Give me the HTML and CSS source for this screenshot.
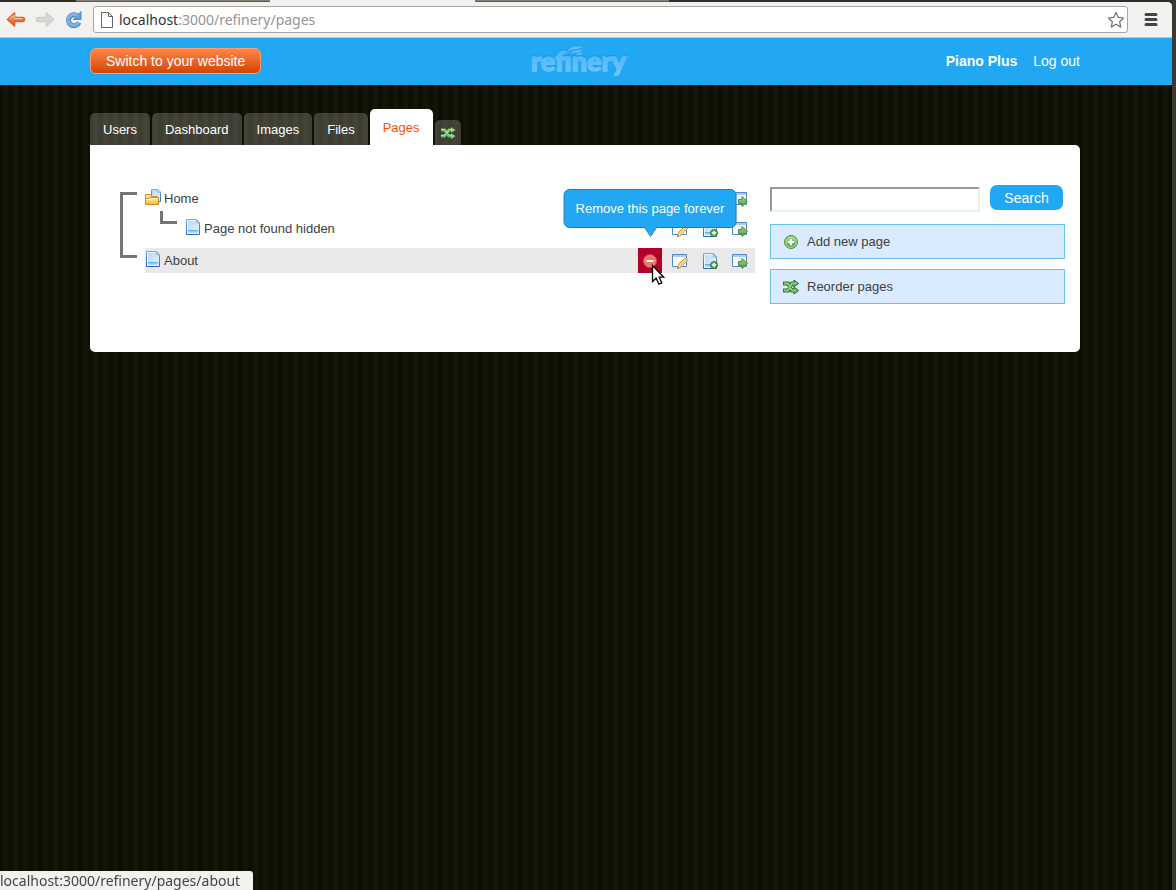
FILE: index.html
```html
<!DOCTYPE html>
<html lang="en">
<head>
<meta charset="utf-8">
<title>Refinery - Pages</title>
<link rel="stylesheet" href="styles.css">
</head>
<body>
<svg class="sprites" aria-hidden="true">
  <defs>
    <linearGradient id="paper" x1="0" y1="0" x2="1" y2="1"><stop offset="0" stop-color="#b5d6f8"/><stop offset="1" stop-color="#eaf5ff"/></linearGradient>
    <linearGradient id="gold" x1="0" y1="0" x2="0" y2="1"><stop offset="0" stop-color="#fff1a0"/><stop offset="1" stop-color="#eebc3c"/></linearGradient>
    <linearGradient id="blueline" x1="0" y1="0" x2="0" y2="1"><stop offset="0" stop-color="#78abe4"/><stop offset="1" stop-color="#2d67b2"/></linearGradient>
    <linearGradient id="leaf" x1="0" y1="0" x2="0" y2="1"><stop offset="0" stop-color="#a5dc88"/><stop offset="1" stop-color="#519941"/></linearGradient>
    <linearGradient id="orange" x1="0" y1="0" x2="0" y2="1"><stop offset="0" stop-color="#f9a66c"/><stop offset="1" stop-color="#d9571a"/></linearGradient>
  </defs>
  <symbol id="page" viewBox="0 0 16 16">
    <path d="M1.500.5h10l3 3v12h-13z" fill="url(#paper)" stroke="url(#blueline)"/>
    <path d="M2.500 14.500v-13H11" fill="none" stroke="#fff" opacity=".7"/>
    <path d="M11.300 1v2.800H14z" fill="#f4faff" stroke="#5b93d4" stroke-width=".6"/>
    <path d="M3 11h10v2.500H3z" fill="#8fd0ff"/><path d="M3 11.500h10" stroke="#57b5ff"/><path d="M2 14.500h12" stroke="#eef8ff"/>
  </symbol>
  <symbol id="folder" viewBox="0 0 16 16">
    <path d="M6.500.5h6.500l2.500 2.500v9.500h-9z" fill="url(#paper)" stroke="url(#blueline)"/>
    <path d="M12.800 1v2.200h2.200" fill="#fff" stroke="#5b93d4" stroke-width=".6"/>
    <path d="M.5 15V5.500h5l1 2h6V15" fill="#ffe68b" stroke="#d59a2e"/>
    <path d="M.5 15.500V9.500H4l1-1h8.500v7z" fill="url(#gold)" stroke="#d58b28"/>
    <path d="M1.500 10.500h3l1-1h7" fill="none" stroke="#fff8cf"/>
  </symbol>
  <symbol id="window" viewBox="0 0 16 16">
    <path d="M.5 1.500h14v12H.5z" fill="#fff" stroke="#5287c8"/>
    <path d="M1 3h13" stroke="#a9cdf5" stroke-width="2"/>
    <path d="M2 5h11v7H2z" fill="#f6faff"/>
  </symbol>
  <symbol id="edit" viewBox="0 0 16 16">
    <use href="#window"/>
    <path d="M5.500 15.500l1-4 6-6q2.500-.5 3 2l-6.500 6.700z" fill="#f5b83e" stroke="#bd7d20"/>
    <path d="M7.500 12l5.500-5.500M9 13.200l5.500-5.500" stroke="#ffe391" stroke-width="1.200"/>
    <path d="M5.800 15.300l.9-3.200 2.100 2z" fill="#fff0d0"/><path d="M5.500 15.500l.5-1.500 1 1z" fill="#544e46"/>
    <path d="M12 6l1-1q2.200.2 2.300 2.200l-1 1z" fill="#f0c49b"/>
  </symbol>
  <symbol id="add" viewBox="0 0 16 16">
    <use href="#page"/>
    <circle cx="12" cy="12" r="3.500" fill="#5aa448" stroke="#347b34"/>
    <path d="M12 9.800v4.400M9.800 12h4.400" stroke="#fff" stroke-width="1.400"/>
  </symbol>
  <symbol id="go" viewBox="0 0 16 16">
    <use href="#window"/>
    <path d="M6.500 8.500h3.500V5.500l5.500 5-5.500 5v-3H6.500z" fill="url(#leaf)" stroke="#468b3b"/>
  </symbol>
  <symbol id="remove" viewBox="0 0 16 16">
    <circle cx="8" cy="8" r="6.500" fill="#e85b50" stroke="#d84c46"/>
    <circle cx="8" cy="8" r="5.300" fill="#ea7065" stroke="#f1a59c" stroke-width=".8"/>
    <path d="M4.500 8h7" stroke="#fff" stroke-width="2"/>
  </symbol>
  <symbol id="plus" viewBox="0 0 16 16">
    <circle cx="8" cy="8" r="6.500" fill="#75b965" stroke="#4c9143"/>
    <circle cx="8" cy="8" r="5.200" fill="url(#leaf)" stroke="#b5dfaa"/>
    <path d="M8 4.800v6.400M4.800 8h6.400" stroke="#fff" stroke-width="2.200"/>
  </symbol>
  <symbol id="shuffle" viewBox="0 0 16 16">
    <path d="M0 4.500h5l4 7h2M0 11.500h5l4-7h2" fill="none" stroke="#35773a" stroke-width="4"/>
    <path d="M11 1l4.500 3.500L11 7.700zM11 8l4.500 3.500L11 15z" fill="#73b765" stroke="#286830"/>
    <path d="M1 4.500h4l4 7h4M1 11.500h4l4-7h4" fill="none" stroke="#8fcc80" stroke-width="2"/>
  </symbol>
  <symbol id="shuffle-tab" viewBox="0 0 16 16">
    <path d="M1 5h3.500l4.500 6h3M1 11h3.500L9 5h3" fill="none" stroke="#6fb766" stroke-width="3"/>
    <path d="M11 2l4.500 3L11 7.700zM11 8.300l4.500 2.700L11 14z" fill="#8fd184"/>
    <path d="M1 4.500h3.500l5 6H12M1 10.500h3.500l5-6H12" fill="none" stroke="#b7eaa6"/>
  </symbol>
</svg>

<div class="frame">
  <div class="tabstrip"><span class="strip-dark"></span><span class="strip-tab"></span><span class="strip-active"></span><span class="strip-tab"></span></div>
  <div class="toolbar">
    <button class="nav back" aria-label="Back"><svg viewBox="0 0 20 20"><path d="M1.500 9.500L8.500 3v4.500H16q2.500 0 2.500 2t-2.500 2H8.500V16z" fill="url(#orange)" stroke="#d9622a" stroke-width="1.600" stroke-linejoin="round"/><path d="M3.500 9L8 5v3.500h8.500" fill="none" stroke="#ffc89e"/></svg></button>
    <button class="nav forward" aria-label="Forward"><svg viewBox="0 0 20 20"><path d="M18.500 9.500L11.500 3v4.500H4q-2.500 0-2.500 2t2.500 2h7.500V16z" fill="#d9d8d6" stroke="#cfcecc" stroke-width="1.600" stroke-linejoin="round"/></svg></button>
    <button class="nav reload" aria-label="Reload"><svg viewBox="0 0 20 20"><path d="M13.500 6A5.500 5.500 0 1 0 15 12.500" fill="none" stroke="#4c86c3" stroke-width="5"/><path d="M17 1.500v8H9.500z" fill="#6aa0d8" stroke="#4c86c3"/><path d="M13.500 6A5.500 5.500 0 1 0 14.500 12.500" fill="none" stroke="#80b1e2" stroke-width="3.200"/></svg></button>
    <div class="address">
      <svg class="doc" viewBox="0 0 12 16"><path d="M.5.500h7l4 4v11H.5z" fill="#fff" stroke="#666"/><path d="M7.500.5v4h4" fill="none" stroke="#666"/></svg>
      <span class="url"><b>localhost</b>:3000/refinery/pages</span>
      <button class="star" aria-label="Bookmark"><svg viewBox="0 0 20 20"><path d="M10 1.500l2.500 5.700 6 .6-4.500 4.100 1.300 6L10 14.800l-5.300 3.100 1.300-6L1.500 7.800l6-.6z" fill="#fff" stroke="#777" stroke-width="1.400" stroke-linejoin="round"/></svg></button>
    </div>
    <button class="menu" aria-label="Menu"><svg viewBox="0 0 14 13"><path d="M2 1.500h10M2 6.500h10M2 11.500h10" stroke="#444" stroke-width="3" stroke-linecap="round"/></svg></button>
  </div>

  <header class="site-bar">
    <div class="bar-inner">
      <div class="bar-left"><a class="switch" href="#">Switch to your website</a></div>
      <a class="logo" href="#" aria-label="refinery">
        <svg viewBox="0 0 110 34"><defs><linearGradient id="logofill" x1="0" y1="0" x2="0" y2="1"><stop offset="0" stop-color="#42b1f7"/><stop offset="1" stop-color="#70c7ff"/></linearGradient></defs>
          <text class="logo-shadow" x="1" y="26">refinery</text><text class="logo-text" x="1" y="27">refinery</text>
          <path d="M36 10q3-8 10-8 5 1 8-1-3 5-8 4.500-6-.5-10 4.500zM39 11q4-6 9-5 4 0 6-2-3 6-8 5-4 0-7 2zM44 11q4-3 7-2.500 2 0 3-1.500-1 5-6 4z" fill="#5dbdfb" stroke="#1b96e3" stroke-width=".5"/>
        </svg>
      </a>
      <nav class="account"><a class="site-name" href="#">Piano Plus</a><a href="#">Log out</a></nav>
    </div>
  </header>

  <main class="wrap">
    <nav class="tabs">
      <a href="#">Users</a><a href="#">Dashboard</a><a href="#">Images</a><a href="#">Files</a><a class="current" href="#">Pages</a>
      <a class="reorder" href="#" aria-label="Reorder tabs"><svg><use href="#shuffle-tab"/></svg></a>
    </nav>
    <div class="panel">
      <section class="tree">
        <span class="bracket"></span>
        <ul>
          <li>
            <div class="row"><svg class="kind"><use href="#folder"/></svg><span class="title">Home</span>
              <span class="actions"><a href="#" aria-label="Edit"><svg><use href="#edit"/></svg></a><a href="#" aria-label="Add child"><svg><use href="#add"/></svg></a><a href="#" aria-label="View"><svg><use href="#go"/></svg></a></span></div>
            <div class="child"><span class="elbow"></span>
              <div class="row"><svg class="kind"><use href="#page"/></svg><span class="title">Page not found hidden</span>
                <span class="actions"><a href="#" aria-label="Edit"><svg><use href="#edit"/></svg></a><a href="#" aria-label="Add child"><svg><use href="#add"/></svg></a><a href="#" aria-label="View"><svg><use href="#go"/></svg></a></span></div>
            </div>
          </li>
          <li>
            <div class="row hovered"><svg class="kind"><use href="#page"/></svg><span class="title">About</span>
              <span class="actions">
                <a class="delete" href="#" aria-label="Remove this page forever"><svg><use href="#remove"/></svg>
                  <span class="tooltip">Remove this page forever<svg class="nib" viewBox="0 0 14 11"><path d="M1 0l6 9 6-9z" fill="#22a7f2"/><path d="M1 .5l6 9 6-9" fill="none" stroke="#1780bd"/></svg></span>
                  <svg class="cursor" viewBox="0 0 14 22"><path d="M1.500 1.500v16l3.700-3.300 2.700 6 2.900-1.300-2.600-5.700h4.500z" fill="#fff" stroke="#000" stroke-width="1.300"/></svg>
                </a><a href="#" aria-label="Edit"><svg><use href="#edit"/></svg></a><a href="#" aria-label="Add child"><svg><use href="#add"/></svg></a><a href="#" aria-label="View"><svg><use href="#go"/></svg></a></span></div>
          </li>
        </ul>
      </section>
      <aside class="side">
        <form class="search"><input type="search" aria-label="Search pages"><button type="button">Search</button></form>
        <a class="action" href="#"><svg><use href="#plus"/></svg>Add new page</a>
        <a class="action" href="#"><svg><use href="#shuffle"/></svg>Reorder pages</a>
      </aside>
    </div>
  </main>
</div>
<div class="status">localhost:3000/refinery/pages/about</div>
</body>
</html>
```

FILE: styles.css
```css
* { box-sizing: border-box; }
body { margin: 0; background: #3b3936; color: #404040; font: 13px/18px "Liberation Sans", Arial, sans-serif; }
a { color: inherit; text-decoration: none; }
svg { display: block; width: 16px; height: 16px; flex: none; }
button { padding: 0; border: 0; background: none; font: inherit; }
.sprites { position: absolute; width: 0; height: 0; }

.frame {
  min-height: 100vh;
  border-right: 4px solid #3b3936;
  background: repeating-linear-gradient(90deg, #0e0e01 0 3px, #141408 3px 8px, #0e0e01 8px 10px);
}

/* Browser chrome */
.tabstrip { display: flex; height: 2px; background: #302e2b; }
.strip-dark { width: 76px; }
.strip-tab { width: 194px; background: #85827b; border-bottom: 1px solid #5e5b56; }
.strip-active { width: 205px; background: #f2f1f0; }
.toolbar {
  display: flex; align-items: center; height: 36px; padding: 0 14px 0 6px;
  background: #f2f1f0; border-bottom: 1px solid #c6c3be; border-top-right-radius: 4px;
}
.nav { width: 20px; margin-right: 9px; }
.nav svg { width: 20px; height: 20px; }
.address {
  flex: 1; display: flex; align-items: center; height: 27px; padding: 0 2px 0 7px;
  background: #fff; border: 1px solid #aaa69f; border-radius: 3px;
}
.doc { width: 12px; height: 16px; margin-right: 6px; }
.url { flex: 1; color: #949494; font: 14px/20px "Noto Sans", sans-serif; }
.url b { color: #333; font-weight: 400; }
.star svg { width: 18px; height: 20px; }
.menu { margin-left: 16px; }
.menu svg { width: 14px; height: 13px; }

/* Site bar */
.site-bar { padding: 0 92px 0 90px; background: #22a7f2; color: #fff; }
.bar-inner { display: flex; align-items: center; justify-content: space-between; max-width: 990px; height: 47px; margin: 0 auto; padding-bottom: 2px; font-size: 14px; }
.bar-left, .account { flex: 1; }
.switch {
  display: inline-block; height: 26px; padding: 0 15px; line-height: 24px;
  border: 1px solid #ff9b6d; border-radius: 6px;
  background: linear-gradient(#ff8548, #d34503);
}
.logo svg { width: 110px; height: 34px; }
.logo-text, .logo-shadow { font: 900 27px Lato, sans-serif; fill: url(#logofill); stroke: url(#logofill); stroke-width: 1.4px; }
.logo-shadow { fill: #1b96e3; stroke: #1b96e3; }
.account { display: flex; justify-content: flex-end; gap: 16px; }
.site-name { font-weight: 700; }

/* Section tabs */
.wrap { max-width: 1172px; margin: 0 auto; padding: 24px 92px 0 90px; }
.tabs { display: flex; align-items: flex-end; gap: 2px; height: 36px; }
.tabs a {
  height: 32px; padding: 0 13px; line-height: 33px; color: #fff;
  background: rgba(255, 255, 255, .2); border-radius: 5px 5px 0 0;
}
.tabs .current { height: 36px; line-height: 37px; background: #fff; color: #ff5000; }
.tabs .reorder { height: 25px; padding: 5px; }

.panel {
  display: flex; gap: 15px; padding: 40px 15px 48px 30px;
  background: #fff; border-radius: 0 5px 5px 5px;
}

/* Page tree */
.tree { flex: 1; display: flex; gap: 8px; padding-top: 1px; }
.tree ul { flex: 1; margin: 0; padding: 0; list-style: none; }
.tree li + li { margin-top: 7px; }
.bracket, .elbow { flex: none; width: 17px; border: solid #777570; }
.bracket { height: 66px; margin-top: 6px; border-width: 3px 0 3px 3px; }
.elbow { height: 13px; border-width: 0 0 3px 3px; }
.row { display: flex; flex: 1; align-items: center; height: 25px; padding-right: 3px; }
.kind { align-self: flex-start; margin: 3px 3px 0 0; }
.title { flex: 1; }
.child { display: flex; gap: 8px; padding-left: 15px; }
.child .row { margin-top: 5px; }
.hovered { background: #e9e9e9; }
.actions { display: flex; gap: 6px; }
.actions a { display: flex; align-items: center; justify-content: center; width: 24px; height: 25px; }
.actions .delete { position: relative; background: #b1002a; }
.tooltip {
  position: absolute; left: 50%; bottom: 45px; transform: translateX(-50%);
  padding: 10px 11px; white-space: nowrap; color: #fff; line-height: 17px;
  background: #22a7f2; border: 1px solid #1780bd; border-radius: 6px;
}
.nib { position: absolute; top: 100%; left: 50%; width: 14px; height: 11px; margin-left: -6px; }
.cursor { position: absolute; left: 13px; top: 16px; width: 14px; height: 22px; }

/* Sidebar */
.side { flex: 0 0 295px; display: flex; flex-direction: column; gap: 10px; }
.search { display: flex; gap: 10px; margin-bottom: 2px; padding-right: 2px; }
.search input {
  flex: 1; min-width: 0; height: 25px; margin: 2px 0 0; padding: 2px 4px;
  border: 2px solid; border-color: #999 #eee #eee #999; border-radius: 0;
  background: #fff; font: inherit; appearance: none;
}
.search button { width: 73px; height: 25px; border-radius: 7px; background: #22a7f2; color: #fff; font-size: 14px; }
.action { display: flex; align-items: center; gap: 8px; height: 35px; padding: 0 12px; background: #dbebff; border: 1px solid #66c2f5; }

.status {
  position: fixed; left: 0; bottom: 0; height: 19px; padding-right: 13px;
  background: #f2f1f0; color: #444; border-top-right-radius: 3px;
  font: 14px/19px "Noto Sans", sans-serif;
}
```
